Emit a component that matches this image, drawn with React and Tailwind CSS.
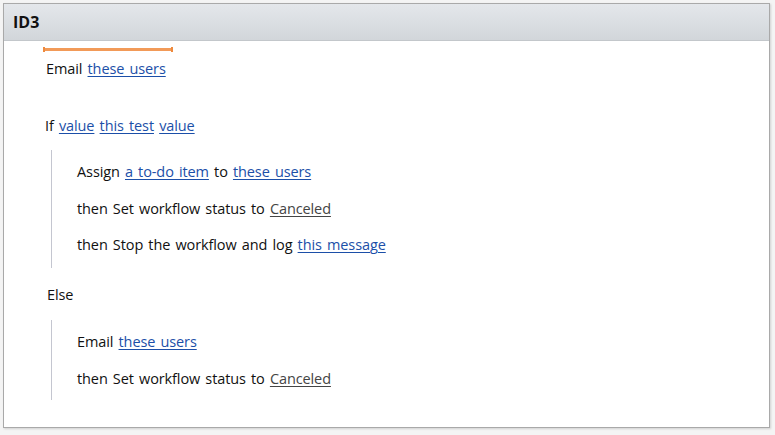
import React from 'react';

const Link = ({ children }) => (
  <span className="text-[#1c4fa8] underline underline-offset-2 decoration-1">{children}</span>
);

const Plain = ({ children }) => (
  <span className="text-[#444] underline underline-offset-2 decoration-1">{children}</span>
);

const Row = ({ children, className = '' }) => (
  <div className={`h-[20px] leading-[20px] whitespace-nowrap ${className}`}>{children}</div>
);

export default function App() {
  return (
    <div className="w-[775px] h-[435px] bg-[#f4f4f4] pl-[3px] pt-[3px]" style={{ fontFamily: '"Open Sans", "Noto Sans", sans-serif' }}>
      <div className="w-[767px] h-[425px] bg-white border border-[#a9a9a9] shadow-[1px_1px_2px_rgba(0,0,0,0.15)] flex flex-col">
        <div className="h-[37px] shrink-0 bg-gradient-to-b from-[#e4e7eb] to-[#d2d6da] border-b border-[#c3c7cb] flex items-center pl-[9px]">
          <span className="text-[16px] font-bold text-[#111]">ID3</span>
        </div>

        <div className="flex flex-col text-[14.5px] tracking-[-0.1px] [word-spacing:1.5px] text-[#111]">
          <div className="mt-[6px] ml-[39px] w-[130px] h-[5px] flex items-center">
            <div className="w-[2px] h-[5px] bg-[#ee8a3e]" />
            <div className="flex-1 h-[3px] bg-[#f29a58]" />
            <div className="w-[2px] h-[5px] bg-[#ee8a3e]" />
          </div>

          <Row className="mt-[7px] ml-[42px]">
            Email <Link>these users</Link>
          </Row>

          <Row className="mt-[37px] ml-[41px]">
            If <Link>value</Link> <Link>this test</Link> <Link>value</Link>
          </Row>

          <div className="mt-[14px] ml-[47px] border-l border-[#c4c6d0] pl-[25px] pt-[12px] pb-[13px] flex flex-col gap-[17px]">
            <Row>
              Assign <Link>a to-do item</Link> to <Link>these users</Link>
            </Row>
            <Row>
              then Set workflow status to <Plain>Canceled</Plain>
            </Row>
            <Row className="-mt-[1px]">
              then Stop the workflow and log <Link>this message</Link>
            </Row>
          </div>

          <Row className="mt-[17px] ml-[43px]">Else</Row>

          <div className="mt-[15px] ml-[47px] border-l border-[#c4c6d0] pl-[25px] pt-[12px] pb-[11px] flex flex-col gap-[17px]">
            <Row>
              Email <Link>these users</Link>
            </Row>
            <Row>
              then Set workflow status to <Plain>Canceled</Plain>
            </Row>
          </div>
        </div>
      </div>
    </div>
  );
}
